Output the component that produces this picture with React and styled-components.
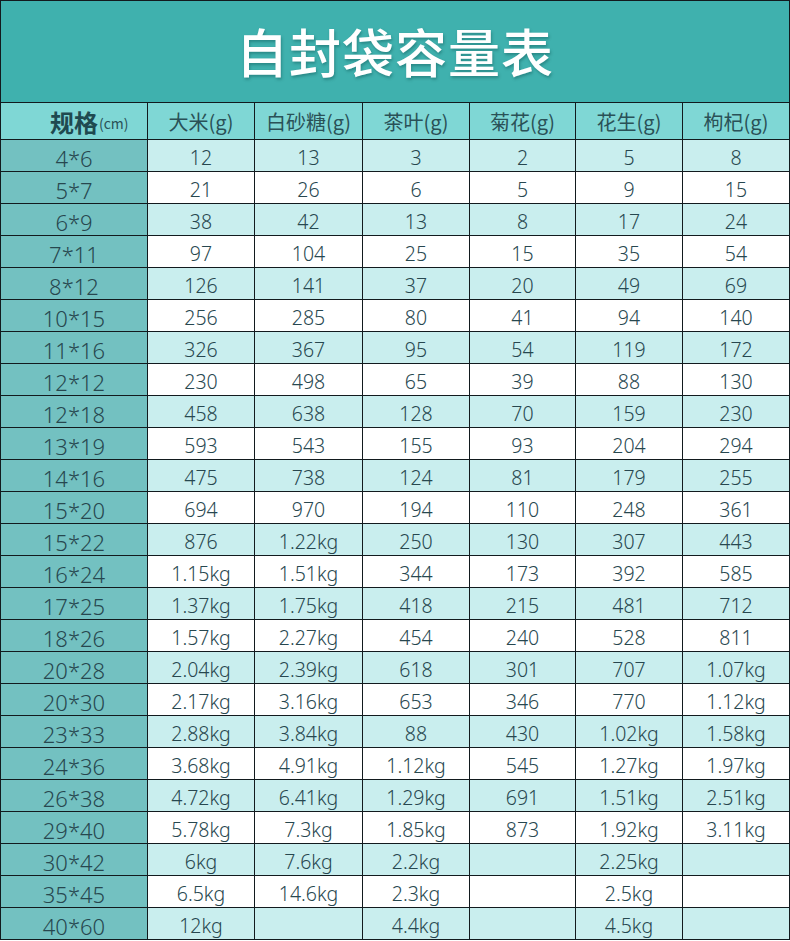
import React from "react";
import styled, { createGlobalStyle } from "styled-components";

const Global = createGlobalStyle`
  html, body { margin: 0; padding: 0; background: #ffffff; }
  body { font-family: "Noto Sans", "Noto Sans CJK SC", sans-serif; }
`;

const Table = styled.div`
  width: 790px;
  box-sizing: border-box;
  display: grid;
  grid-template-columns: 146px 106px 107px 106px 105px 106px 106px;
  grid-template-rows: 101px 36px repeat(25, 31px);
  gap: 1px;
  padding: 1px;
  background: #121a1e;
`;

const Title = styled.div`
  grid-column: 1 / -1;
  background: #3fb1ae;
  display: flex;
  align-items: center;
  justify-content: center;
  color: #ffffff;
  font-family: "Noto Sans CJK SC", sans-serif;
  font-weight: 500;
  font-size: 52px;
  letter-spacing: 1px;
  padding-bottom: 2px;
  text-shadow: 1px 2px 3px rgba(0, 60, 60, 0.35);
`;

const HeadCell = styled.div`
  background: #7fd7d5;
  display: flex;
  align-items: center;
  justify-content: ${(p) => (p.$first ? "flex-start" : "center")};
  padding-left: ${(p) => (p.$first ? "49px" : "0")};
  color: #2a5157;
  font-family: "Noto Sans CJK SC", sans-serif;
  font-size: 20px;
  font-weight: 400;
  white-space: nowrap;
`;

const HeadMain = styled.span`
  font-weight: 700;
  font-size: 24px;
  color: #1f4a50;
`;

const HeadUnit = styled.span`
  font-size: 14px;
  font-weight: 400;
  margin-left: 1px;
  padding-top: 4px;
`;

const Cell = styled.div`
  background: ${(p) => (p.$spec ? "#73c1c1" : p.$alt ? "#c9eeee" : "#ffffff")};
  display: flex;
  align-items: center;
  justify-content: center;
  padding-top: 4px;
  box-sizing: border-box;
  color: #27474f;
  font-family: "Noto Sans", "Noto Sans CJK SC", sans-serif;
  font-weight: 300;
  font-size: ${(p) => (p.$spec ? "22px" : "19.5px")};
  line-height: 1;
  white-space: nowrap;
`;

const headers = ["大米(g)", "白砂糖(g)", "茶叶(g)", "菊花(g)", "花生(g)", "枸杞(g)"];

const rows = [
  ["4*6", "12", "13", "3", "2", "5", "8"],
  ["5*7", "21", "26", "6", "5", "9", "15"],
  ["6*9", "38", "42", "13", "8", "17", "24"],
  ["7*11", "97", "104", "25", "15", "35", "54"],
  ["8*12", "126", "141", "37", "20", "49", "69"],
  ["10*15", "256", "285", "80", "41", "94", "140"],
  ["11*16", "326", "367", "95", "54", "119", "172"],
  ["12*12", "230", "498", "65", "39", "88", "130"],
  ["12*18", "458", "638", "128", "70", "159", "230"],
  ["13*19", "593", "543", "155", "93", "204", "294"],
  ["14*16", "475", "738", "124", "81", "179", "255"],
  ["15*20", "694", "970", "194", "110", "248", "361"],
  ["15*22", "876", "1.22kg", "250", "130", "307", "443"],
  ["16*24", "1.15kg", "1.51kg", "344", "173", "392", "585"],
  ["17*25", "1.37kg", "1.75kg", "418", "215", "481", "712"],
  ["18*26", "1.57kg", "2.27kg", "454", "240", "528", "811"],
  ["20*28", "2.04kg", "2.39kg", "618", "301", "707", "1.07kg"],
  ["20*30", "2.17kg", "3.16kg", "653", "346", "770", "1.12kg"],
  ["23*33", "2.88kg", "3.84kg", "88", "430", "1.02kg", "1.58kg"],
  ["24*36", "3.68kg", "4.91kg", "1.12kg", "545", "1.27kg", "1.97kg"],
  ["26*38", "4.72kg", "6.41kg", "1.29kg", "691", "1.51kg", "2.51kg"],
  ["29*40", "5.78kg", "7.3kg", "1.85kg", "873", "1.92kg", "3.11kg"],
  ["30*42", "6kg", "7.6kg", "2.2kg", "", "2.25kg", ""],
  ["35*45", "6.5kg", "14.6kg", "2.3kg", "", "2.5kg", ""],
  ["40*60", "12kg", "", "4.4kg", "", "4.5kg", ""],
];

export default function App() {
  return (
    <>
      <Global />
      <Table>
        <Title>自封袋容量表</Title>
        <HeadCell $first>
          <HeadMain>规格</HeadMain>
          <HeadUnit>(cm)</HeadUnit>
        </HeadCell>
        {headers.map((h) => (
          <HeadCell key={h}>{h}</HeadCell>
        ))}
        {rows.map((r, i) =>
          r.map((v, j) => (
            <Cell key={`${i}-${j}`} $spec={j === 0} $alt={i % 2 === 0}>
              {v}
            </Cell>
          ))
        )}
      </Table>
    </>
  );
}
